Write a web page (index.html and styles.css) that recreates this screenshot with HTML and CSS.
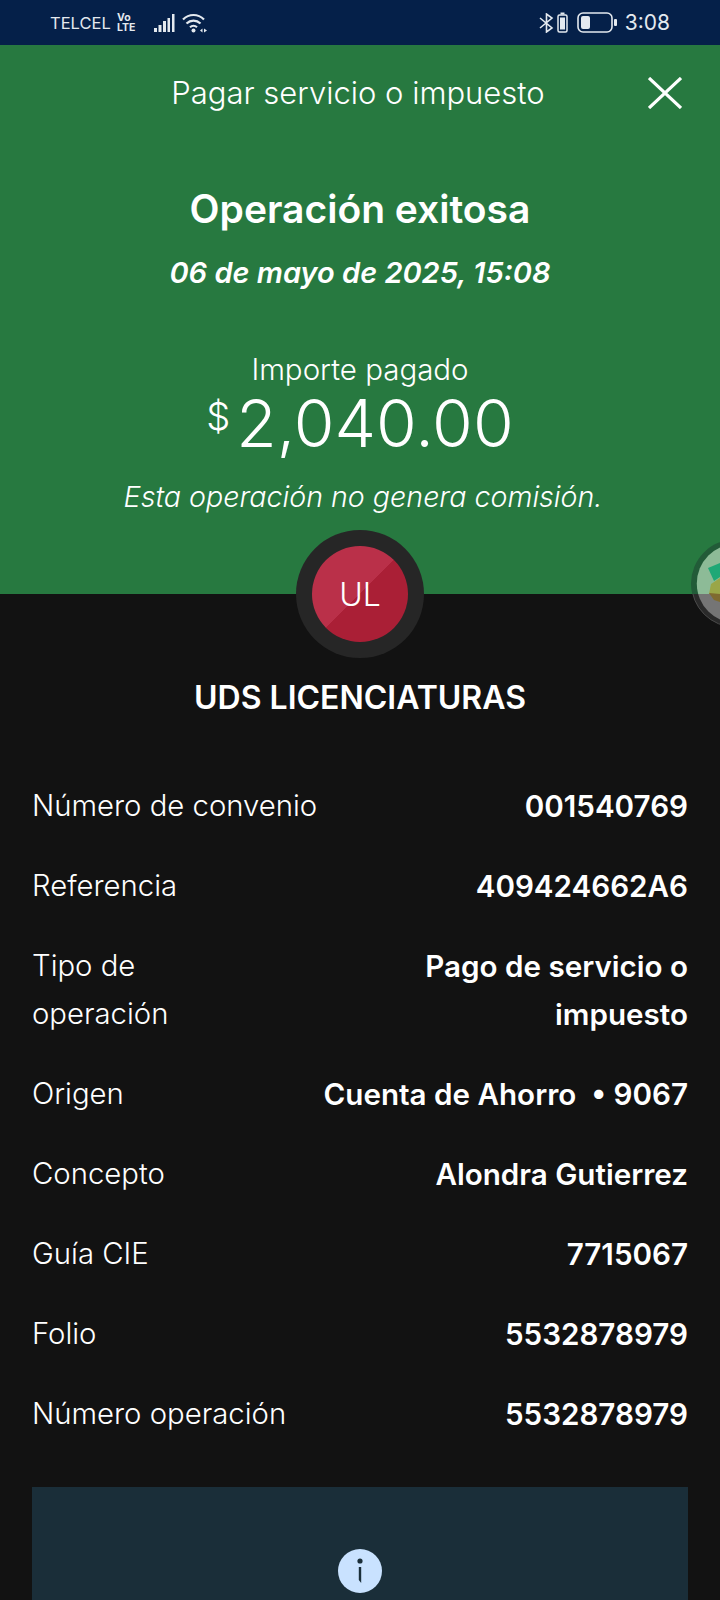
FILE: index.html
```html
<!DOCTYPE html>
<html lang="es">
<head>
    <meta charset="UTF-8">
    <meta name="viewport" content="width=device-width, initial-scale=1.0">
    <title>Pagar servicio o impuesto</title>
    <link rel="stylesheet" href="styles.css">
</head>
<body>
    <div class="status-bar">
        <div class="status-left">
            <span class="carrier">TELCEL</span>
            <span class="volte"><span>Vo</span><span>LTE</span></span>
            <svg class="signal" width="21" height="20" viewBox="0 0 21 20"><g fill="#e4e9ef"><rect x="0" y="15" width="3" height="4"/><rect x="4.5" y="12" width="3" height="7"/><rect x="9" y="8" width="3" height="11"/><rect x="13.5" y="5" width="2.5" height="14"/><rect x="18" y="1" width="2.5" height="18"/></g></svg>
            <svg class="wifi" width="25" height="20" viewBox="0 0 25 20" fill="none" stroke="#e4e9ef" stroke-width="2.2"><path d="M1 6.5c6-6 15-6 21 0M4.5 10.5c4-3.8 10-3.8 14 0M8 14.2c2-1.8 5-1.8 7 0"/><circle cx="11.5" cy="17.5" r="2" fill="#e4e9ef" stroke="none"/><path d="M18 17.5l2.5-2v4zM25 17.5l-3-2v4z" fill="#e4e9ef" stroke="none"/></svg>
        </div>
        <div class="status-right">
            <svg class="bt" width="15" height="20" viewBox="0 0 15 20" fill="none" stroke="#e4e9ef" stroke-width="1.6"><path d="M1 5l12 10-5.5 4V1L13 5 1 15"/></svg>
            <svg class="mini-batt" width="11" height="21" viewBox="0 0 11 21"><rect x="1" y="3" width="9" height="17" rx="1.5" fill="none" stroke="#e4e9ef" stroke-width="1.5"/><rect x="3" y="5.5" width="5" height="12" fill="#e4e9ef"/><rect x="3.5" y="0.5" width="4" height="2" fill="#e4e9ef"/></svg>
            <svg class="battery" width="40" height="21" viewBox="0 0 40 21"><rect x="1" y="1" width="34" height="19" rx="5" fill="none" stroke="#e4e9ef" stroke-width="1.6"/><rect x="4" y="4" width="9" height="13" rx="2" fill="#e4e9ef"/><rect x="37" y="7" width="3" height="7" rx="1" fill="#e4e9ef"/></svg>
            <span class="clock">3:08</span>
        </div>
    </div>

    <header class="hero">
        <div class="top-row">
            <h2 class="top-title">Pagar servicio o impuesto</h2>
            <svg class="close" width="34" height="32" viewBox="0 0 34 32" fill="none" stroke="#fff" stroke-width="3.2"><path d="M1 1l32 30M33 1L1 31"/></svg>
        </div>
        <h1 class="result">Operación exitosa</h1>
        <p class="date">06 de mayo de 2025, 15:08</p>
        <p class="amount-label">Importe pagado</p>
        <div class="amount"><span class="currency">$</span><span>2,040.00</span></div>
        <p class="note">Esta operación no genera comisión.</p>
        <div class="avatar"><div class="avatar-inner">UL</div></div>
        <!-- floating shortcut, cut off by the screen edge; it sits over the green and the black part -->
        <svg class="float-bubble" width="30" height="90" viewBox="0 0 30 90">
            <defs>
                <clipPath id="overGreen"><rect width="30" height="54"/></clipPath>
                <clipPath id="overBlack"><rect y="54" width="30" height="36"/></clipPath>
            </defs>
            <g clip-path="url(#overGreen)">
                <circle cx="45" cy="43.5" r="44" fill="#225b38"/>
                <circle cx="46.5" cy="43.5" r="39.7" fill="#8dbb97"/>
            </g>
            <g clip-path="url(#overBlack)">
                <circle cx="45" cy="43.5" r="43.5" fill="#2a2a2a" stroke="#4a4a4a"/>
                <circle cx="46.5" cy="43.5" r="39.7" fill="#757575"/>
            </g>
            <path d="M18 28l12-5v14l-6 4z" fill="#1fa876"/>
            <path d="M21 44l9-6v16H19z" fill="#9aa648"/>
            <path d="M19 53l11 1v8l-6-2z" fill="#7f6a30"/>
        </svg>
    </header>

    <main class="details">
        <h3 class="company">UDS LICENCIATURAS</h3>
        <div class="rows">
            <div class="row"><span class="label">Número de convenio</span><span class="value">001540769</span></div>
            <div class="row"><span class="label">Referencia</span><span class="value">409424662A6</span></div>
            <div class="row"><span class="label narrow">Tipo de operación</span><span class="value narrow-value">Pago de servicio o impuesto</span></div>
            <div class="row"><span class="label">Origen</span><span class="value">Cuenta de Ahorro &nbsp;• 9067</span></div>
            <div class="row"><span class="label">Concepto</span><span class="value">Alondra Gutierrez</span></div>
            <div class="row"><span class="label">Guía CIE</span><span class="value">7715067</span></div>
            <div class="row"><span class="label">Folio</span><span class="value">5532878979</span></div>
            <div class="row"><span class="label">Número operación</span><span class="value">5532878979</span></div>
        </div>
        <div class="info-box">
            <svg class="info-icon" width="44" height="44" viewBox="0 0 44 44"><circle cx="22" cy="22" r="22" fill="#c9e2ff"/><circle cx="22" cy="12" r="2.6" fill="#1a2e39"/><path d="M20.8 18h2.4v16l-2.4-3z" fill="#1a2e39"/></svg>
        </div>
    </main>
</body>
</html>
```

FILE: styles.css
```css
* {
    box-sizing: border-box;
}

html, body {
    margin: 0;
    height: 1600px;
    overflow: hidden;
}

body {
    font-family: Inter, "Noto Sans", sans-serif;
    background-color: #121212;
    color: #fff;
}

p, h1, h2, h3 {
    margin: 0;
    font-weight: normal;
}

svg {
    display: block;
}

.status-bar {
    height: 45px;
    background-color: #052049;
    display: flex;
    align-items: center;
    justify-content: space-between;
    padding: 0 50px 0 50px;
    color: #e4e9ef;
}

.status-left, .status-right {
    display: flex;
    align-items: center;
}

.carrier {
    font-size: 16.5px;
    width: 67px;
}

.volte {
    display: flex;
    flex-direction: column;
    width: 37px;
    font-size: 10.5px;
    line-height: 10px;
    font-weight: 700;
}

.wifi {
    margin-left: 7px;
}

.mini-batt {
    margin-left: 3px;
}

.battery {
    margin-left: 9px;
}

.clock {
    font-size: 21px;
    margin-left: 8px;
}

.hero {
    position: relative;
    height: 549px;
    background-color: #277940;
    text-align: center;
}

.top-row {
    height: 94px;
    display: flex;
    align-items: center;
    justify-content: center;
    padding-right: 4px;
}

.top-title {
    font-size: 31px;
    font-weight: 300;
}

.close {
    position: absolute;
    right: 38px;
    top: 32px;
}

.result {
    font-size: 39px;
    font-weight: 600;
    line-height: 46px;
    margin-top: 47px;
}

.date {
    font-size: 29px;
    line-height: 36px;
    font-weight: 600;
    font-style: italic;
    margin-top: 23px;
}

.amount-label {
    font-size: 29.5px;
    line-height: 32px;
    font-weight: 300;
    margin-top: 62px;
}

.amount {
    display: flex;
    justify-content: center;
    font-size: 66px;
    font-weight: 300;
    line-height: 60px;
    margin-top: 8px;
}

.currency {
    font-size: 38px;
    line-height: 40px;
    margin-top: 3px;
    margin-right: 6px;
}

.note {
    font-size: 28.6px;
    line-height: 36px;
    font-style: italic;
    font-weight: 300;
    margin-top: 26px;
    padding-left: 6px;
}

.avatar {
    position: absolute;
    left: 296px;
    top: 485px;
    width: 128px;
    height: 128px;
    border-radius: 50%;
    background-color: #262626;
    display: flex;
    align-items: center;
    justify-content: center;
}

.avatar-inner {
    width: 96px;
    height: 96px;
    border-radius: 50%;
    background: linear-gradient(135deg, #ba3049 50%, #aa1f36 50%);
    display: flex;
    align-items: center;
    justify-content: center;
    font-size: 32px;
    font-weight: 300;
}

.float-bubble {
    position: absolute;
    right: 0;
    top: 495px;
}

.details {
    padding: 0 32px;
}

.company {
    font-size: 32px;
    font-weight: 600;
    text-align: center;
    margin-top: 84px;
    line-height: 40px;
}

.rows {
    margin-top: 64px;
    display: flex;
    flex-direction: column;
    gap: 32px;
}

.row {
    display: flex;
    justify-content: space-between;
    align-items: flex-start;
    line-height: 48px;
}

.label {
    font-size: 29.3px;
    font-weight: 300;
}

.label.narrow {
    width: 170px;
}

.value {
    font-size: 29.6px;
    font-weight: 600;
    text-align: right;
}

.value.narrow-value {
    width: 296px;
}

.info-box {
    margin-top: 49px;
    height: 113px;
    background-color: #1a2e39;
    display: flex;
    justify-content: center;
    padding-top: 62px;
}
```
